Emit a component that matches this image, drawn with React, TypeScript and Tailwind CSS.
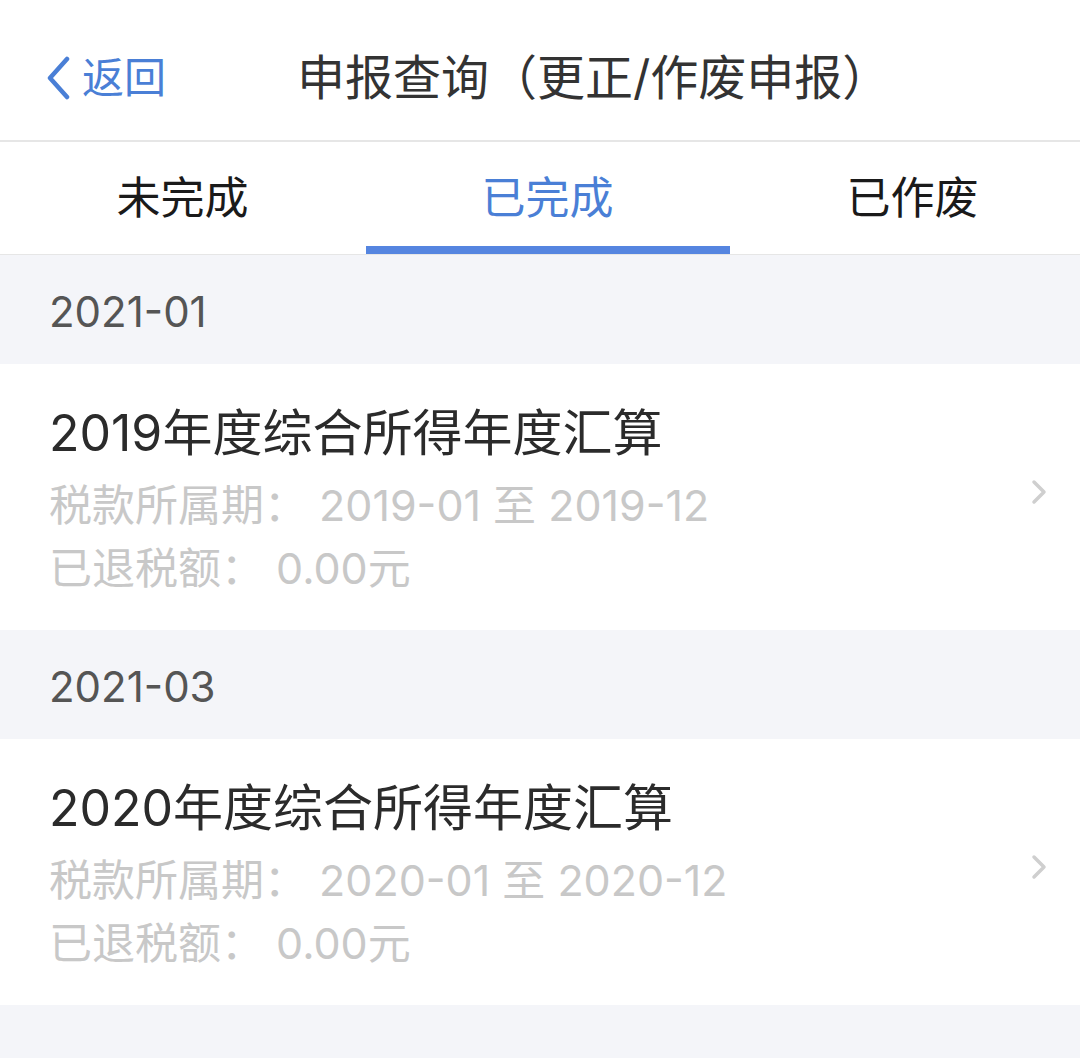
import React from 'react'

const font = { fontFamily: 'Inter, "Noto Sans CJK SC", sans-serif' }

interface Record {
  month: string
  title: string
  period: string
  refund: string
}

const records: Record[] = [
  { month: '2021-01', title: '2019年度综合所得年度汇算', period: '2019-01 至 2019-12', refund: '0.00元' },
  { month: '2021-03', title: '2020年度综合所得年度汇算', period: '2020-01 至 2020-12', refund: '0.00元' }
]

const tabs = ['未完成', '已完成', '已作废']

export default function App() {
  const active = 1

  return (
    <div className="w-[1080px] h-[1058px] overflow-hidden bg-[#f4f5f9]" style={font}>
      {/* Nav bar */}
      <div className="h-[142px] bg-white flex items-center pt-[16px] border-b-2 border-[#e6e6e6]">
        <div className="flex items-center pl-[45px] text-[#4a7fd6]">
          <svg width="26" height="44" viewBox="0 0 26 44" fill="none">
            <path d="M22 3 L5 22 L22 41" stroke="#4a7fd6" strokeWidth="4.5" strokeLinecap="round" strokeLinejoin="round" />
          </svg>
          <span className="ml-[11px] text-[42px] leading-none">返回</span>
        </div>
        <h1 className="ml-[131px] text-[48px] leading-none text-[#333] font-normal">申报查询（更正/作废申报）</h1>
      </div>

      {/* Tabs */}
      <div className="h-[113px] bg-white overflow-hidden grid grid-cols-[365px_365px_365px] border-b border-[#e6e6e6]">
        {tabs.map((t, i) => (
          <div key={t} className="relative flex items-center justify-center">
            <span className={`text-[44px] leading-none ${i === active ? 'text-[#4a7fd6]' : 'text-[#1a1a1a]'}`}>{t}</span>
            {i === active && <div className="absolute bottom-0 left-[1px] right-0 h-[8px] bg-[#5585e0]" />}
          </div>
        ))}
      </div>

      {/* List */}
      {records.map((r) => (
        <div key={r.month}>
          <div className="h-[109px] flex items-center pl-[49px] pt-[4px] text-[42px] text-[#555] leading-none">{r.month}</div>
          <div className="h-[266px] bg-white flex items-start">
            <div className="flex-1 pl-[49px] pt-[39px]">
              <div className="text-[50px] leading-[60px] text-[#2b2b2b]">{r.title}</div>
              <div className="mt-[11px] text-[43px] leading-[63px] text-[#c8c8c8]">税款所属期： {r.period}</div>
              <div className="text-[43px] leading-[63px] text-[#c8c8c8]">已退税额： {r.refund}</div>
            </div>
            <div className="self-center pr-[33px] pb-[10px]">
              <svg width="16" height="26" viewBox="0 0 16 26" fill="none">
                <path d="M3 3 L13 13 L3 23" stroke="#cfcfcf" strokeWidth="3.5" strokeLinecap="round" strokeLinejoin="round" />
              </svg>
            </div>
          </div>
        </div>
      ))}
    </div>
  )
}
